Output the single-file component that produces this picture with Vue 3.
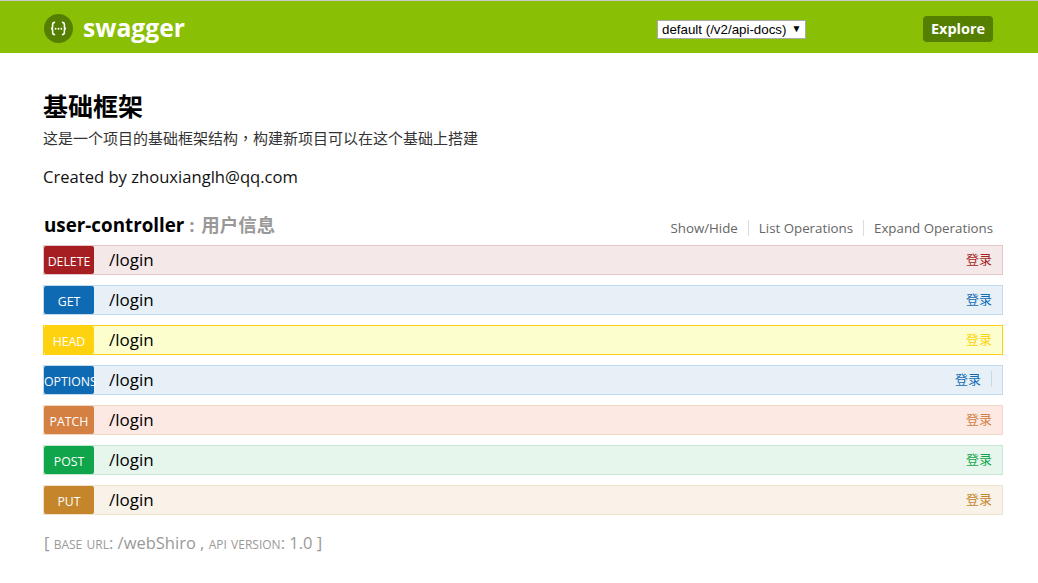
<script setup>
const ops = [
  { m: 'DELETE', c: 'delete' },
  { m: 'GET', c: 'get' },
  { m: 'HEAD', c: 'head' },
  { m: 'OPTIONS', c: 'options' },
  { m: 'PATCH', c: 'patch' },
  { m: 'POST', c: 'post' },
  { m: 'PUT', c: 'put' },
]
</script>

<template>
  <div class="page">
    <header class="header">
      <div class="brand">
        <span class="logo">
          <svg width="29" height="29" viewBox="0 0 30 30">
            <circle cx="15" cy="15" r="15" fill="#547f00" />
            <path d="M11.5 8.5c-2 0-2.6 1-2.6 2.6v2c0 1.200-.6 1.900-1.700 1.900 1.100 0 1.700.7 1.700 1.900v2c0 1.600.6 2.600 2.600 2.600M18.500 8.500c2 0 2.600 1 2.600 2.600v2c0 1.200.6 1.900 1.700 1.900-1.100 0-1.700.7-1.700 1.900v2c0 1.600-.6 2.600-2.600 2.600" fill="none" stroke="#fff" stroke-width="1.600" />
            <circle cx="12" cy="15.200" r="1" fill="#fff" />
            <circle cx="15" cy="15.200" r="1" fill="#fff" />
            <circle cx="18" cy="15.200" r="1" fill="#fff" />
          </svg>
        </span>
        <span class="brand-name">swagger</span>
      </div>
      <div class="select">
        <span>default (/v2/api-docs)</span>
        <span class="caret">▼</span>
      </div>
      <a class="explore">Explore</a>
    </header>

    <main class="main">
      <h1 class="title">基础框架</h1>
      <p class="desc">这是一个项目的基础框架结构<span class="comma">，</span>构建新项目可以在这个基础上搭建</p>
      <p class="contact">Created by zhouxianglh@qq.com</p>

      <div class="res-head">
        <h2 class="res-title">user-controller <span class="res-sub">: 用户信息</span></h2>
        <ul class="res-links">
          <li>Show/Hide</li>
          <li>List Operations</li>
          <li>Expand Operations</li>
        </ul>
      </div>

      <ul class="ops">
        <li v-for="op in ops" :key="op.m" class="op" :class="op.c">
          <span class="badge">{{ op.m }}</span>
          <span class="path">/login</span>
          <span class="summary">登录</span>
        </li>
      </ul>

      <p class="footer">
        [ <span class="sc">base url</span>: /webShiro , <span class="sc">api version</span>: 1.0 ]
      </p>
    </main>
  </div>
</template>

<style>
html, body { margin: 0; background: #fff; }
</style>

<style scoped>
.page {
  width: 1038px;
  height: 583px;
  overflow: hidden;
  font-family: "Open Sans", "Noto Sans CJK SC", sans-serif;
  color: #000;
  border-top: 1px solid #c8c8c8;
  box-sizing: border-box;
}
.header {
  height: 52px;
  background: #89bf04;
  display: flex;
  align-items: center;
  padding: 2px 45px 0 44px;
  box-sizing: border-box;
}
.brand { display: flex; align-items: center; width: 613px; }
.logo { display: flex; width: 29px; height: 29px; margin-right: 10px; }
.brand-name { color: #fff; font-size: 24.7px; font-weight: 700; line-height: 30px; }
.select {
  width: 149px;
  height: 19px;
  margin-top: 3px;
  box-sizing: border-box;
  background: #fff;
  border: 1px solid #aaa;
  font-family: "Liberation Sans", sans-serif;
  font-size: 13.33px;
  line-height: 17px;
  padding-left: 4px;
  display: flex;
  align-items: center;
  color: #000;
  white-space: nowrap;
}
.caret { font-size: 10px; margin-left: 5px; margin-top: -2px; }
.explore {
  margin-left: auto;
  margin-top: 2px;
  width: 70px;
  height: 26px;
  background: #547f00;
  color: #fff;
  border-radius: 4px;
  font-size: 14.5px;
  font-weight: 700;
  line-height: 26px;
  text-align: center;
}
.main { padding: 0 35px 0 43px; }
.title {
  margin: 34px 0 0;
  font-size: 25px;
  line-height: 36px;
  font-weight: 700;
  font-family: "Noto Sans CJK SC", sans-serif;
}
.desc {
  margin: 4px 0 0;
  font-size: 15px;
  line-height: 21px;
  color: #333;
  font-family: "Noto Sans CJK SC", sans-serif;
}
.comma { font-family: "Noto Sans CJK TC", sans-serif; }
.contact { margin: 17px 0 0; font-size: 16.6px; line-height: 24px; color: #111; }
.res-head {
  display: flex;
  justify-content: space-between;
  align-items: flex-end;
  margin-top: 22px;
  height: 34px;
}
.res-title {
  margin: 0 0 6px 1px;
  font-size: 18.8px;
  line-height: 27px;
  font-weight: 700;
  color: #000;
}
.res-sub { color: #999; font-size: 18.5px; word-spacing: 2px; }
.res-links {
  display: flex;
  list-style: none;
  margin: 0 10px 9px 0;
  padding: 0;
  font-size: 13.3px;
  line-height: 16px;
  color: #666;
}
.res-links li { padding: 0 10px; border-right: 1px solid #ddd; }
.res-links li:first-child { padding-left: 0; }
.res-links li:last-child { padding-right: 0; border-right: 0; }
.ops {
  list-style: none;
  margin: 0;
  padding: 0;
  display: flex;
  flex-direction: column;
  gap: 10px;
}
.op {
  height: 30px;
  box-sizing: border-box;
  border: 1px solid;
  display: flex;
  align-items: center;
  padding-right: 10px;
}
.badge {
  width: 50px;
  height: 28px;
  border-radius: 2px;
  color: #fff;
  font-size: 12.3px;
  line-height: 31px;
  text-align: center;
  flex-shrink: 0;
  white-space: nowrap;
}
.path { margin-left: 15px; font-size: 17px; line-height: 28px; color: #000; }
.summary { margin-left: auto; margin-bottom: 2px; font-size: 13px; line-height: 26px; }
.delete { background: #f5e8e8; border-color: #e8c6c7; }
.delete .badge { background: #a41e22; }
.delete .summary { color: #a41e22; }
.get { background: #e7f0f7; border-color: #c3d9ec; }
.get .badge { background: #0f6ab4; }
.get .summary { color: #0f6ab4; }
.head { background: #fcffcd; border-color: #ffd20f; }
.head .badge { background: #ffd20f; }
.head .summary { color: #ffd20f; }
.options { background: #e7f0f7; border-color: #c3d9ec; }
.options .badge { background: #0f6ab4; }
.options .summary { color: #0f6ab4; padding-right: 10px; border-right: 1px solid #c3d9ec; line-height: 16px; }
.patch { background: #fce9e3; border-color: #f5d5c3; }
.patch .badge { background: #d38042; }
.patch .summary { color: #d38042; }
.post { background: #e7f6ec; border-color: #c3e8d1; }
.post .badge { background: #10a54a; }
.post .summary { color: #10a54a; }
.put { background: #f9f2e9; border-color: #f0e0ca; }
.put .badge { background: #c5862b; }
.put .summary { color: #c5862b; }
.footer {
  margin: 16px 0 0 1px;
  font-size: 16.5px;
  line-height: 24px;
  color: #999;
}
.sc { font-variant: small-caps; }
</style>
